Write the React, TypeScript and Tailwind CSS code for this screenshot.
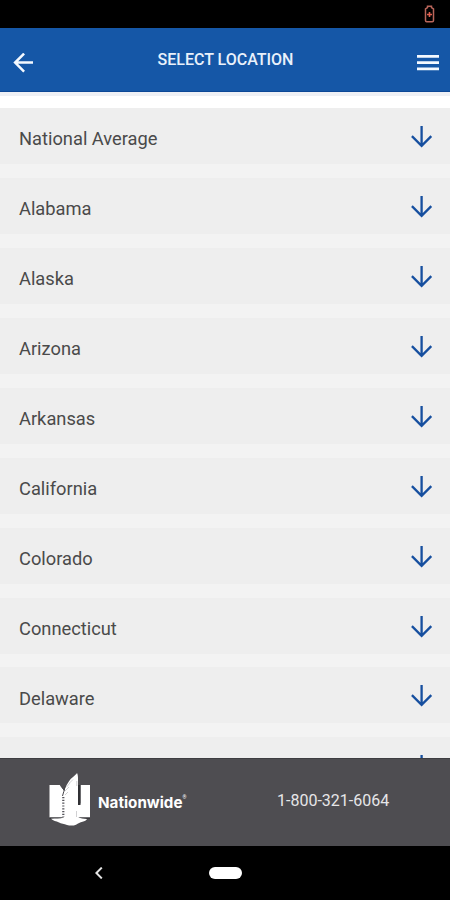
import React from 'react'

// ================================
// DATA
// ================================

const LOCATIONS = [
  'National Average',
  'Alabama',
  'Alaska',
  'Arizona',
  'Arkansas',
  'California',
  'Colorado',
  'Connecticut',
  'Delaware',
]

// ================================
// ICONS
// ================================

const BatteryIcon = () => (
  <svg className="w-[11px] h-[18px]" viewBox="0 0 11 18" fill="none" stroke="#b9655a">
    <path d="M3.5 2.6V1.2h4v1.4l2 1.4v11.5a1.2 1.2 0 0 1-1.2 1.2H2.7a1.2 1.2 0 0 1-1.2-1.2V4z" strokeWidth="1.5" />
    <path d="M5.5 7v5M3 9.5h5" stroke="#e0604f" strokeWidth="1.6" />
  </svg>
)

const BackIcon = () => (
  <svg className="w-5 h-5" viewBox="0 0 20 20" fill="none" stroke="#f4f9ff" strokeWidth="2.5">
    <path d="M20 9.6H2.2M11.1 .6L2.1 9.6l9 9" />
  </svg>
)

const MenuIcon = () => (
  <svg className="w-[22px] h-4" viewBox="0 0 22 16" fill="#f4f9ff">
    <path d="M0 0h22v2.8H0zM0 6.2h22V9H0zM0 12.4h22v2.8H0z" />
  </svg>
)

const ArrowDownIcon = () => (
  <svg className="w-[22px] h-[22px]" viewBox="0 0 22 22" fill="none" stroke="#164f9f" strokeWidth="2.3">
    <path d="M10.6 0v19.5M.9 10.1l9.7 9.7 9.7-9.7" />
  </svg>
)

const EagleLogo = () => (
  <svg className="w-[42px] h-[56px] shrink-0" viewBox="0 0 42 56">
    {/* N */}
    <path d="M1.5 14H12l5 7v25.5H1.500zM32.500 14H42v32.500H30V32.500h2.500z" fill="#fff" />
    <path d="M1.500 46.500h14v1.300h-14zM30 14h2.500v20H30zM31 46.500h11v1.300H31z" fill="#303034" />
    {/* Wing and tail */}
    <path
      d="M29 2c-1.500 2.500-5.500 4.300-8.300 8.700-3 4.300-4.700 8.300-5 14.300l.3 21.500c-4 1.300-8.400.9-13 1.300 2 2.300 5.500 2.200 7.500 3.500 3 1.700 5.500 1.300 8.500 2.600 3 1 6.500.9 9-.2 2.300-1.300 4-2.300 6.500-2.900 2.200-.6 3.800-1.500 4.500-2.800-3-.7-6.500-.2-8.700-1.800L30 42V7c0-2-.3-3.800-1-5z"
      fill="#fff"
    />
    <path d="M12.300 14.300l3.700 4.700M17 15.500l-1.200 5-1.300 4.500" fill="none" stroke="#46454a" strokeWidth="1" />
    <path d="M15.300 26v20" stroke="#55545a" strokeWidth="2.200" strokeDasharray="1.200 1.600" />
    <path
      d="M25 8.500l-3.500 3.500M22 12l-3.500 4M21 16l-4 4M20 21l-3 3M28.800 10v5M28.500 40v6"
      fill="none"
      stroke="#bdbdc0"
      strokeWidth="0.700"
    />
  </svg>
)

// ================================
// LOCATION ROW
// ================================

interface LocationRowProps {
  name?: string
}

const LocationRow: React.FC<LocationRowProps> = ({ name }) => (
  <li className="flex h-14 shrink-0 items-start justify-between bg-[#eeeeee] pl-[19px] pr-[17px]">
    <span className="pt-[17.2px] text-[18.3px] leading-7 text-[#4a4a4a]">{name}</span>
    <span className="pt-[18px]">
      <ArrowDownIcon />
    </span>
  </li>
)

// ================================
// SCREEN
// ================================

export default function App() {
  return (
    <div className="flex h-[900px] w-[450px] flex-col overflow-hidden bg-black font-[Roboto,sans-serif]">
      {/* Status bar */}
      <div className="flex h-7 shrink-0 items-start justify-end pr-[15px] pt-[5px]">
        <BatteryIcon />
      </div>

      {/* Header */}
      <header className="flex h-16 shrink-0 items-center justify-between border-b border-[#0c4796] bg-[#1557a7] pl-[13px] pr-[11px]">
        <span className="pt-1.5">
          <BackIcon />
        </span>
        <h1 className="pl-px pt-px text-base font-medium leading-6 text-[#e9f1fb]">SELECT LOCATION</h1>
        <span className="pt-1.5">
          <MenuIcon />
        </span>
      </header>

      {/* Locations */}
      <main className="h-[666px] shrink-0 overflow-hidden bg-[#f3f3f3]">
        <div className="h-4 border-t-4 border-[#eef0f5] bg-white" />
        <ul className="flex flex-col gap-[13.9px] pt-[0.3px]">
          {LOCATIONS.map((name) => (
            <LocationRow key={name} name={name} />
          ))}
          <LocationRow />
        </ul>
      </main>

      {/* Footer */}
      <footer className="flex h-[88px] shrink-0 items-start border-t border-[#3d3d41] bg-[#4e4d51] pl-12 pt-3">
        <EagleLogo />
        <div className="flex w-[187px] items-start pl-2 pt-[21.5px] text-white">
          <span className="font-[Inter,sans-serif] text-[15.2px] font-bold leading-5">Nationwide</span>
          <span className="pt-0.5 text-[5px] leading-none">®</span>
        </div>
        <span className="pt-[17.5px] text-base leading-6 text-[#e6e6e8]">1-800-321-6064</span>
      </footer>

      {/* System navigation */}
      <nav className="flex flex-1 items-start pl-[95px] pt-[21px]">
        <svg className="h-3 w-2" viewBox="0 0 8 12" fill="none" stroke="#e4e4e4" strokeWidth="2">
          <path d="M6.8 .6L1.4 6l5.400 5.400" />
        </svg>
        <div className="ml-[106px] h-3 w-[33px] rounded-full bg-white" />
      </nav>
    </div>
  )
}
